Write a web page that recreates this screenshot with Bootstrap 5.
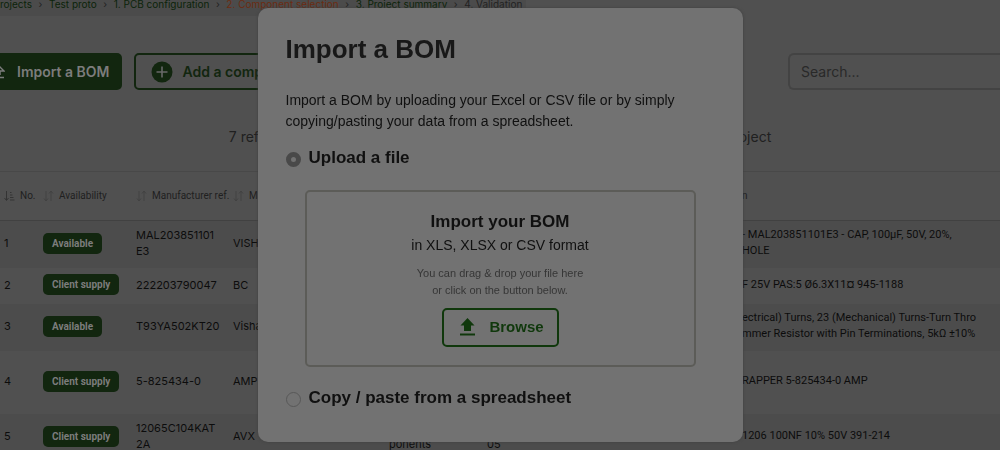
<!DOCTYPE html>
<html lang="en">
<head>
<meta charset="utf-8">
<meta name="viewport" content="width=device-width, initial-scale=1">
<title>Import a BOM</title>
<link href="https://cdn.jsdelivr.net/npm/bootstrap@5.3.0/dist/css/bootstrap.min.css" rel="stylesheet">
<style>
body{background:#505050;color:#0c0c0c;font-family:Inter,"Liberation Sans",sans-serif;font-size:14px}
a{text-decoration:none}
.crumbs{height:16px;font-size:10px;line-height:9px;white-space:nowrap;color:#222}
.crumbs>div{background:#4b4b4b;padding-right:4px}
.crumbs a{color:#0c240a}
.crumbs a.current{color:#6b2c12}
.crumbs .sep{width:17px;text-align:center}
.tools{padding-top:37px}
.tools .btn{height:37px;line-height:16px;font-size:14px;font-weight:600;border:2px solid #12260f;border-radius:5px;white-space:nowrap}
.tools .btn-solid{background:#12260f;color:#7c7c7c;gap:12px;padding:0 10px 0 0}
.tools .btn-line{color:#12260f;gap:10px;padding:0 15px}
.tool-set{gap:12px}
.search-box,.search-box:focus{width:212px;height:37px;background:#505050;border:2px solid #434343;border-radius:6px 0 0 6px;border-right:0;padding:0 11px;font-size:14px;color:#262626}
.search-box::placeholder{color:#292929}
.intro{padding:35px 0 22px;font-size:14px;line-height:24px;color:#202020}
.parts{table-layout:fixed;width:100%;font-size:11px;line-height:16px;border-top:1px solid #484848}
.parts th{height:49px;font-family:Roboto,sans-serif;font-weight:400;font-size:10px;color:#202020;border-bottom:1px solid #414141}
.parts th,.parts td{padding:0 0 2px 4px;white-space:nowrap;vertical-align:middle}
.parts th{padding-bottom:0}
.parts th span{gap:5px}
.parts td{height:47px}
.parts td:last-child{font-family:Roboto,sans-serif;font-size:11px}
.parts tr.one td{height:36px}
.parts tr.tall td{height:63px}
.parts tbody tr:nth-child(odd){background:#4c4c4c}
.parts svg{flex:none}
.status-tag{display:inline-block;background:#12260f;color:#7c7c7c;font-family:Roboto,sans-serif;font-weight:700;font-size:10px;line-height:21px;border-radius:5px;padding:0 9px;vertical-align:middle}
.c-no{width:39px}.c-av{width:93px}.c-ref{width:97px}.c-man{width:156px}.c-cat{width:98px}.c-pack{width:255px}
.overlay{padding-top:8px}
.dialog-box{width:100%;max-width:485px;background:#727272;border-radius:10px;padding:25px 28px 33px;font-family:"Liberation Sans",sans-serif;color:#101010;box-shadow:0 0 3px #404040}
.dialog-box h1{font-size:26px;line-height:32px;font-weight:700;margin-bottom:25px;color:#181818}
.dialog-box p{font-size:14px;line-height:21px;margin-bottom:15px}
.option label{font-size:17px;line-height:22px;font-weight:700}
.option .form-check-input{width:15px;height:15px;margin:5px 0 0;background-color:transparent;border:1px solid #585858}
.option .form-check-input:checked{background:#727272;border:5px solid #494949}
.drop-area{margin:21px 19px 20px;border:2px solid #5c5c58;border-radius:5px;padding:18px 0;text-align:center}
.drop-area h2{font-size:17px;line-height:24px;font-weight:700;margin:0}
.drop-area .formats{line-height:22px;font-size:14px;margin:0 0 9px}
.drop-area .hint{font-size:11px;line-height:17px;color:#363636;margin:0 0 9px}
.browse,.browse:hover{width:117px;height:39px;border:2px solid #10380c;border-radius:5px;color:#10380c;font-size:15px;font-weight:700;gap:14px}
</style>
</head>
<body class="vh-100 overflow-hidden">
<nav class="crumbs d-flex" aria-label="Breadcrumb"><div class="d-flex">
<a href="#">rojects</a><span class="sep">›</span><a href="#">Test proto</a><span class="sep">›</span><a href="#">1. PCB configuration</a><span class="sep">›</span><a href="#" class="current">2. Component selection</a><span class="sep">›</span><a href="#">3. Project summary</a><span class="sep">›</span><span>4. Validation</span>
</div></nav>
<main>
<div class="tools d-flex justify-content-between">
<div class="tool-set d-flex">
<button class="btn btn-solid d-flex align-items-center rounded-start-0 border-start-0"><svg width="5" height="18" viewBox="0 0 5 18" fill="none" stroke="#7c7c7c" stroke-width="1.500"><path d="M-2 2 4 8H0v4M-8 14.500H4"/></svg><span>Import a BOM</span></button>
<button class="btn btn-line d-flex align-items-center"><svg width="22" height="22" viewBox="0 0 22 22"><circle cx="11" cy="11" r="10.500" fill="#12260f"/><path d="M11 5.500v11M5.500 11h11" stroke="#686868" stroke-width="1.600"/></svg><span>Add a component</span></button>
</div>
<input class="form-control search-box flex-shrink-0" type="search" placeholder="Search..." aria-label="Search">
</div>
<div class="intro text-center">7 references have been added to the bill of materials for the version of this project</div>
<table class="parts">
<colgroup><col class="c-no"><col class="c-av"><col class="c-ref"><col class="c-man"><col class="c-cat"><col class="c-pack"><col></colgroup>
<thead><tr>
<th><span class="d-flex align-items-center"><svg width="11" height="12" viewBox="0 0 11 12" fill="none" stroke="#343434"><path d="M2.500 1v9M.5 8l2 2.500 2-2.500M6 2.500h1.500M6 5h2.500M6 7.500h3.500M6 10h4.500"/></svg>No.</span></th>
<th><span class="d-flex align-items-center"><svg width="11" height="12" viewBox="0 0 11 12" fill="none" stroke="#424242"><path d="M3 1v10M1 8.500l2 2.500 2-2.500M8 11V1M6 3.500 8 1l2 2.500"/></svg>Availability</span></th>
<th><span class="d-flex align-items-center"><svg width="11" height="12" viewBox="0 0 11 12" fill="none" stroke="#424242"><path d="M3 1v10M1 8.500l2 2.500 2-2.500M8 11V1M6 3.500 8 1l2 2.500"/></svg>Manufacturer ref.</span></th>
<th><span class="d-flex align-items-center"><svg width="11" height="12" viewBox="0 0 11 12" fill="none" stroke="#424242"><path d="M3 1v10M1 8.500l2 2.500 2-2.500M8 11V1M6 3.500 8 1l2 2.500"/></svg>Manufacturer</span></th>
<th></th><th></th><th>n</th></tr></thead>
<tbody>
<tr><td>1</td><td><span class="status-tag">Available</span></td><td>MAL203851101<br>E3</td><td>VISHAY</td><td></td><td></td><td>- MAL203851101E3 - CAP, 100µF, 50V, 20%,<br>HOLE</td></tr>
<tr class="one"><td>2</td><td><span class="status-tag">Client supply</span></td><td>222203790047</td><td>BC</td><td></td><td></td><td>F 25V PAS:5 Ø6.3X11¤ 945-1188</td></tr>
<tr><td>3</td><td><span class="status-tag">Available</span></td><td>T93YA502KT20</td><td>Vishay</td><td></td><td></td><td>ectrical) Turns, 23 (Mechanical) Turns-Turn Thro<br>mmer Resistor with Pin Terminations, 5kΩ ±10%</td></tr>
<tr class="tall"><td>4</td><td><span class="status-tag">Client supply</span></td><td>5-825434-0</td><td>AMP</td><td></td><td></td><td>RAPPER 5-825434-0 AMP</td></tr>
<tr><td>5</td><td><span class="status-tag">Client supply</span></td><td>12065C104KAT<br>2A</td><td>AVX</td><td>Passive com<br>ponents</td><td>12<br>05</td><td>1206 100NF 10% 50V 391-214</td></tr>
</tbody>
</table>
</main>
<div class="overlay position-fixed top-0 start-0 w-100 d-flex justify-content-center">
<section class="dialog-box" role="dialog" aria-labelledby="dlg-title">
<h1 id="dlg-title">Import a BOM</h1>
<p>Import a BOM by uploading your Excel or CSV file or by simply copying/pasting your data from a spreadsheet.</p>
<div class="option d-flex gap-2"><input class="form-check-input" type="radio" name="source" id="src-file" checked><label for="src-file">Upload a file</label></div>
<div class="drop-area">
<h2>Import your BOM</h2>
<div class="formats">in XLS, XLSX or CSV format</div>
<div class="hint">You can drag &amp; drop your file here<br>or click on the button below.</div>
<button class="btn browse d-inline-flex align-items-center justify-content-center p-0 ps-1"><svg width="15" height="19" viewBox="0 0 15 19" fill="#10380c"><path d="M7.500 0 14.500 7.500H11V13H4V7.500H.5zM0 15.500h15v2H0z"/></svg>Browse</button>
</div>
<div class="option d-flex gap-2"><input class="form-check-input" type="radio" name="source" id="src-paste"><label for="src-paste">Copy / paste from a spreadsheet</label></div>
</section>
</div>
<script src="https://cdn.jsdelivr.net/npm/bootstrap@5.3.0/dist/js/bootstrap.bundle.min.js"></script>
</body>
</html>
